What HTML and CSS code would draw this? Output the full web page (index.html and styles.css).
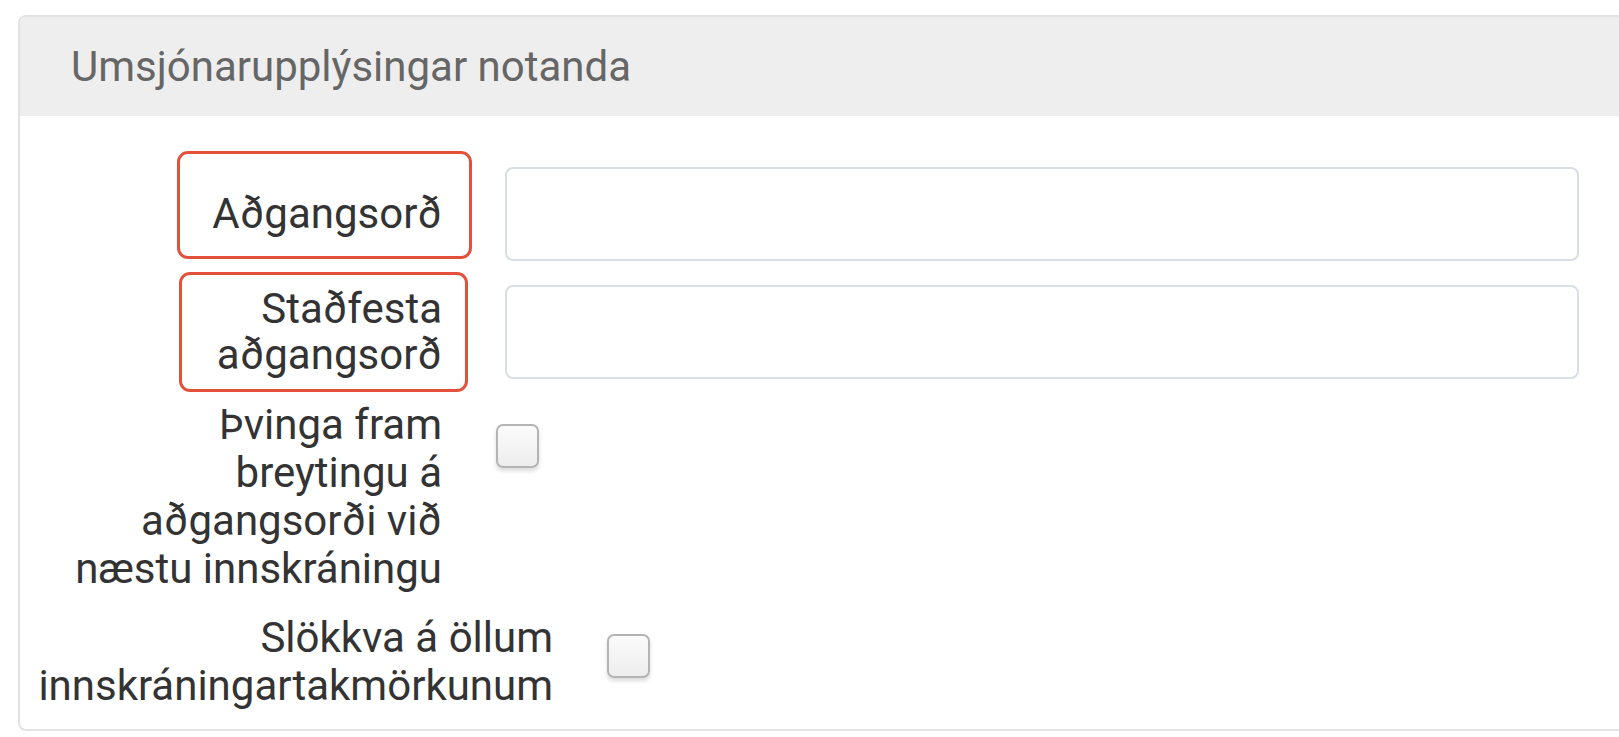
FILE: index.html
```html
<!DOCTYPE html>
<html lang="is">
<head>
  <meta charset="UTF-8">
  <meta name="viewport" content="width=device-width, initial-scale=1.0">
  <title>Umsjónarupplýsingar notanda</title>
  <link rel="stylesheet" href="styles.css">
</head>
<body>

<div class="panel">
  <div class="panel-heading">Umsjónarupplýsingar notanda</div>
  <div class="panel-body">
    <div class="form-row row-password">
      <span class="highlight hl-password"></span>
      <label class="control-label" for="password">Aðgangsorð</label>
      <input type="password" id="password" class="form-control">
    </div>
    <div class="form-row row-confirm">
      <span class="highlight hl-confirm"></span>
      <label class="control-label" for="confirm">Staðfesta<br>aðgangsorð</label>
      <input type="password" id="confirm" class="form-control">
    </div>
    <div class="form-row row-force">
      <label class="control-label" for="force">Þvinga fram<br>breytingu á<br>aðgangsorði við<br>næstu innskráningu</label>
      <span class="checkbox" id="force"></span>
    </div>
    <div class="form-row row-limits">
      <label class="control-label wide" for="limits">Slökkva á öllum<br>innskráningartakmörkunum</label>
      <span class="checkbox" id="limits"></span>
    </div>
  </div>
</div>

</body>
</html>
```

FILE: styles.css
```css
body {
  margin: 0;
  overflow: hidden;
  background-color: #fff;
  font-family: 'Roboto', 'Liberation Sans', sans-serif;
  color: #333;
}

.panel {
  width: 1680px;
  margin: 15px 0 0 18px;
  border: 2px solid #e2e2e2;
  border-radius: 8px;
  overflow: hidden;
}

.panel-heading {
  height: 99px;
  line-height: 99px;
  padding-left: 51px;
  font-size: 42px;
  color: #666;
  background-color: #eeeeee; /* light grey header */
}

.panel-body {
  padding: 51px 0 19px 0;
}

.form-row {
  position: relative;
  display: flex;
}

.control-label {
  width: 422px;
  flex-shrink: 0;
  text-align: right;
  font-size: 42px;
  line-height: 48px;
  color: #333;
}

.control-label.wide {
  width: 533px;
}

.row-password,
.row-confirm {
  align-items: center;
}

.row-password {
  margin-bottom: 24px;
}

.row-confirm {
  margin-bottom: 22px;
}

.row-confirm .control-label {
  line-height: 46px;
}

.row-force {
  margin-bottom: 21px;
}

.form-control {
  width: 1074px;
  height: 94px;
  margin-left: 63px;
  box-sizing: border-box;
  border: 2px solid #d9dee4;
  border-radius: 8px;
  background-color: #fff;
  outline: none;
}

.checkbox {
  width: 43px;
  height: 44px;
  margin-left: 54px;
  box-sizing: border-box;
  border: 2px solid #b4b4b4;
  border-radius: 7px;
  background: linear-gradient(#fbfbfb, #ededed);
  box-shadow: 0 3px 4px rgba(0, 0, 0, 0.14);
}

.row-force .checkbox {
  margin-top: 23px;
}

.row-limits .checkbox {
  margin-top: 20px;
}

/* red annotation boxes drawn over the labels */
.highlight {
  position: absolute;
  box-sizing: border-box;
  border: 3px solid #e4513b;
  border-radius: 11px;
}

.hl-password {
  left: 157px;
  top: -16px;
  width: 295px;
  height: 108px;
}

.hl-confirm {
  left: 159px;
  top: -13px;
  width: 289px;
  height: 120px;
}
```
